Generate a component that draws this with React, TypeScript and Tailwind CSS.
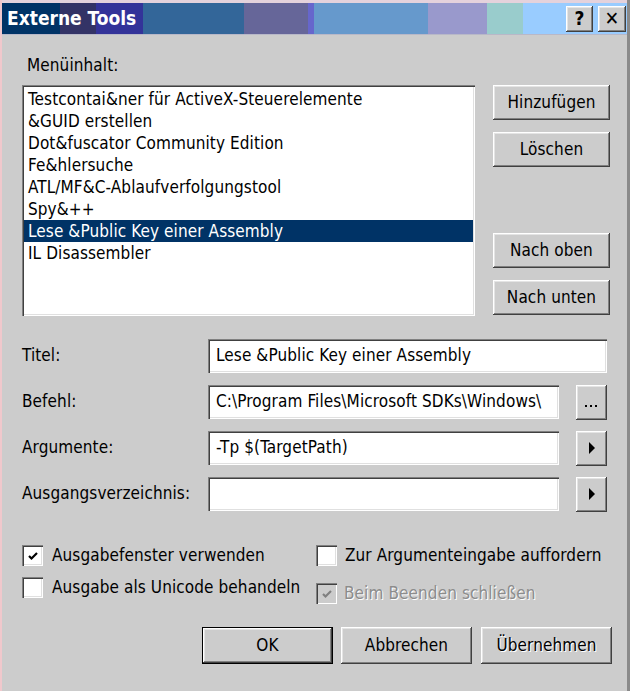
import React from "react";

const raised =
  "bg-[#cccccc] shadow-[inset_-1px_-1px_#404040,inset_1px_1px_#ffffff,inset_-2px_-2px_#808080,inset_2px_2px_#e4e4e4]";
const sunken =
  "bg-white shadow-[inset_1px_1px_#808080,inset_2px_2px_#404040,inset_-1px_-1px_#ffffff,inset_-2px_-2px_#e0e0e0]";

const items = [
  "Testcontai&ner für ActiveX-Steuerelemente",
  "&GUID erstellen",
  "Dot&fuscator Community Edition",
  "Fe&hlersuche",
  "ATL/MF&C-Ablaufverfolgungstool",
  "Spy&++",
  "Lese &Public Key einer Assembly",
  "IL Disassembler",
];

function Btn({ children, className = "" }: { children: React.ReactNode; className?: string }) {
  return (
    <div className={`${raised} flex items-center justify-center text-black ${className}`}>{children}</div>
  );
}

function Check({ checked, disabled }: { checked?: boolean; disabled?: boolean }) {
  return (
    <div
      className={`w-[21px] h-[21px] shrink-0 flex items-center justify-center ${
        disabled
          ? "bg-[#cccccc] shadow-[inset_1px_1px_#808080,inset_2px_2px_#404040,inset_-1px_-1px_#ffffff]"
          : sunken
      }`}
    >
      {checked && (
        <svg width="12" height="12" viewBox="0 0 12 12">
          <path
            d="M2 6 L4.5 8.5 L10 3"
            fill="none"
            stroke={disabled ? "#808080" : "#000"}
            strokeWidth="2.2"
          />
        </svg>
      )}
    </div>
  );
}

function Arrow() {
  return (
    <svg width="8" height="12" viewBox="0 0 8 12">
      <path d="M1 0 L7 6 L1 12 Z" fill="#000" />
    </svg>
  );
}

function Dots() {
  return (
    <svg width="13" height="3" viewBox="0 0 13 3" className="mt-[8px]">
      <rect x="0" y="0" width="2" height="2" fill="#000" />
      <rect x="5" y="0" width="2" height="2" fill="#000" />
      <rect x="10" y="0" width="2" height="2" fill="#000" />
    </svg>
  );
}

export default function App() {
  return (
    <div
      className="w-[630px] h-[691px] bg-[#cccccc] border-l-2 border-l-[#f0c8cc] border-r-[3px] border-r-[#8a8a8a] flex flex-col text-[17px] tracking-[0.1px] text-black"
      style={{ fontFamily: '"DejaVu Sans Condensed", "DejaVu Sans", sans-serif' }}
    >
      <div className="h-[3px] bg-[#e4d2dc]" />
      <div className="h-[31px] flex items-center pl-[5px] pr-[1px] bg-[linear-gradient(to_right,#003366_0_58px,#333366_58px_94px,#333399_94px_141px,#336699_141px_242px,#666699_242px_306px,#6666cc_306px_312px,#6699cc_312px_426px,#9999cc_426px_485px,#99cccc_485px_521px,#99ccff_521px)]">
        <span className="text-white font-bold text-[19px] tracking-[0px]">Externe Tools</span>
        <div className="ml-auto flex gap-[5px]">
          <Btn className="w-[27px] h-[26px] font-bold text-[19px]">?</Btn>
          <Btn className="w-[28px] h-[26px] font-bold text-[19px]">✕</Btn>
        </div>
      </div>
      <div className="h-[1px] bg-[#b8b8c8]" />

      <div className="mt-[19px] ml-[25px] h-[22px] leading-[22px]">Menüinhalt:</div>

      <div className="mt-[9px] flex ml-[20px]">
        <div className={`${sunken} w-[453px] h-[231px] pt-[3px] px-[2px]`}>
          {items.map((t, i) => (
            <div
              key={t}
              className={`h-[22px] leading-[22px] pl-[4px] whitespace-nowrap ${
                i === 6 ? "bg-[#003366] text-white" : ""
              }`}
            >
              {t}
            </div>
          ))}
        </div>
        <div className="ml-[18px] w-[117px] flex flex-col">
          <Btn className="h-[35px]">Hinzufügen</Btn>
          <Btn className="h-[35px] mt-[12px]">Löschen</Btn>
          <Btn className="h-[35px] mt-auto">Nach oben</Btn>
          <Btn className="h-[35px] mt-[12px] mb-[1px]">Nach unten</Btn>
        </div>
      </div>

      <div className="mt-[23px] ml-[20px] flex flex-col gap-[12px]">
        <div className="flex items-center h-[34px]">
          <div className="w-[186px]">Titel:</div>
          <div className={`${sunken} w-[399px] h-[34px] flex items-center pl-[8px]`}>
            Lese &amp;Public Key einer Assembly
          </div>
        </div>
        <div className="flex items-center h-[34px]">
          <div className="w-[186px]">Befehl:</div>
          <div className={`${sunken} w-[351px] h-[34px] flex items-center pl-[8px] pr-[2px] overflow-hidden whitespace-nowrap`}>
            C:\Program Files\Microsoft SDKs\Windows\
          </div>
          <Btn className="ml-[17px] w-[31px] h-[35px]">
            <Dots />
          </Btn>
        </div>
        <div className="flex items-center h-[34px]">
          <div className="w-[186px]">Argumente:</div>
          <div className={`${sunken} w-[351px] h-[34px] flex items-center pl-[8px]`}>-Tp $(TargetPath)</div>
          <Btn className="ml-[17px] w-[31px] h-[35px]">
            <Arrow />
          </Btn>
        </div>
        <div className="flex items-center h-[34px]">
          <div className="w-[186px]">Ausgangsverzeichnis:</div>
          <div className={`${sunken} w-[351px] h-[34px]`} />
          <Btn className="ml-[17px] w-[31px] h-[35px]">
            <Arrow />
          </Btn>
        </div>
      </div>

      <div className="mt-[34px] ml-[20px] flex">
        <div className="w-[294px] flex flex-col gap-[11px]">
          <div className="flex items-center gap-[9px] h-[21px]">
            <Check checked />
            <span>Ausgabefenster verwenden</span>
          </div>
          <div className="flex items-center gap-[9px] h-[21px]">
            <Check />
            <span className="whitespace-nowrap">Ausgabe als Unicode behandeln</span>
          </div>
        </div>
        <div className="flex flex-col gap-[17px]">
          <div className="flex items-center gap-[8px] h-[21px]">
            <Check />
            <span className="whitespace-nowrap">Zur Argumenteingabe auffordern</span>
          </div>
          <div className="flex items-center gap-[7px] h-[21px]">
            <Check checked disabled />
            <span className="text-[#8c8c8c] [text-shadow:1px_1px_0_#ffffff]">Beim Beenden schließen</span>
          </div>
        </div>
      </div>

      <div className="mt-[23px] ml-[200px] flex gap-[8px]">
        <div className="w-[131px] h-[37px] border border-black flex">
          <Btn className="flex-1">OK</Btn>
        </div>
        <Btn className="w-[131px] h-[37px]">Abbrechen</Btn>
        <Btn className="w-[131px] h-[37px] ml-[1px] text-[#8c8c8c] [text-shadow:1px_1px_0_#ffffff]">Übernehmen</Btn>
      </div>
    </div>
  );
}
